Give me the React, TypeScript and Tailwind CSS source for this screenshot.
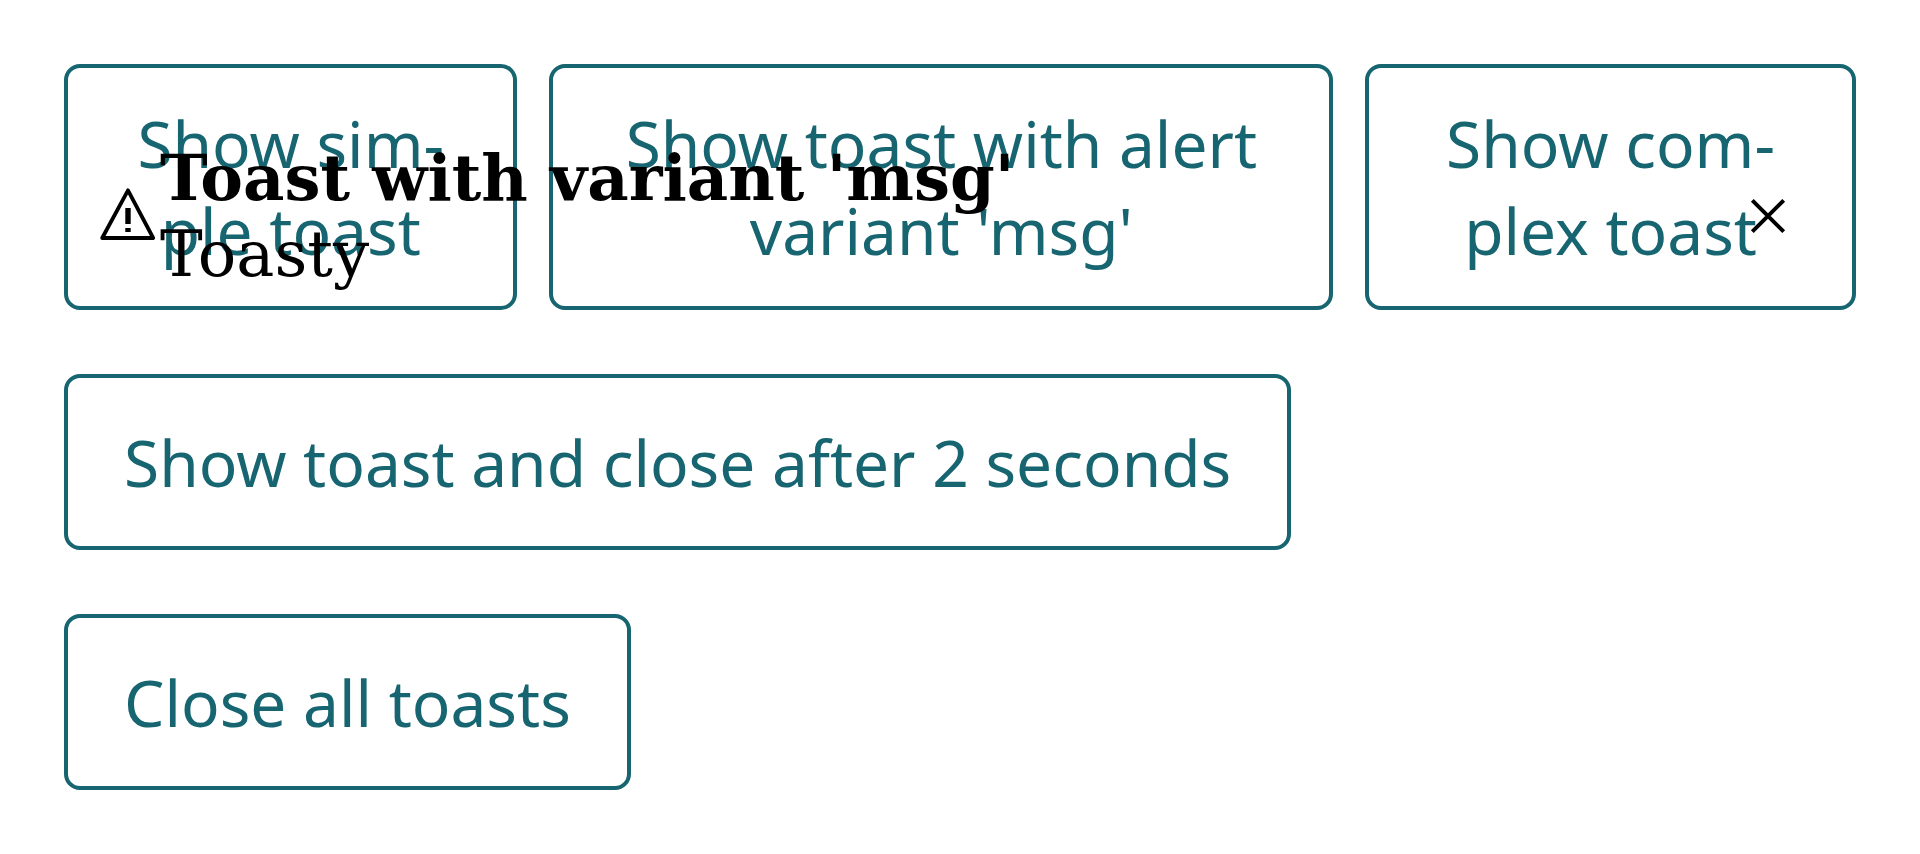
import type { ReactNode } from "react";

function Button({ children }: { children: ReactNode }) {
  return (
    <div className="flex">
      <button
        type="button"
        className="min-h-44 w-full rounded-2xl border-4 border-[#166570] bg-white px-14 py-8 text-center font-['Noto_Sans',sans-serif] text-[64px] leading-[87px] text-[#166570]"
      >
        {children}
      </button>
    </div>
  );
}

function WarningIcon() {
  return (
    <svg viewBox="0 0 64 64" className="size-16 shrink-0" fill="none" aria-hidden="true">
      <path d="M32 6.3 L57.2 54 H6.2 Z" stroke="currentColor" strokeWidth="3.8" strokeLinejoin="round" />
      <path d="M32 24 V40 M32 44 V48" stroke="currentColor" strokeWidth="5.4" />
    </svg>
  );
}

function CloseIcon() {
  return (
    <svg viewBox="0 0 64 64" className="size-16" fill="none" aria-hidden="true">
      <path d="M16.3 16.3 L47.7 47.7 M47.7 16.3 L16.3 47.7" stroke="currentColor" strokeWidth="4" />
    </svg>
  );
}

function Toast() {
  return (
    <div
      role="status"
      className="absolute inset-x-0 top-[139px] flex items-center pr-[120px] pl-24 font-['DejaVu_Serif',serif] text-[64px] leading-[77px] text-black"
    >
      <WarningIcon />
      <div className="grow">
        <h2 className="font-bold">Toast with variant 'msg'</h2>
        <p>Toasty</p>
      </div>
      <button type="button" aria-label="Close toast">
        <CloseIcon />
      </button>
    </div>
  );
}

export default function App() {
  return (
    <main className="relative flex min-h-screen flex-col gap-16 bg-white p-16">
      <div className="flex gap-8">
        <Button>Show sim&shy;ple toast</Button>
        <Button>Show toast with alert variant 'msg'</Button>
        <Button>Show com&shy;plex toast</Button>
      </div>
      <div className="flex">
        <Button>Show toast and close after 2 seconds</Button>
      </div>
      <div className="flex">
        <Button>Close all toasts</Button>
      </div>
      <Toast />
    </main>
  );
}
